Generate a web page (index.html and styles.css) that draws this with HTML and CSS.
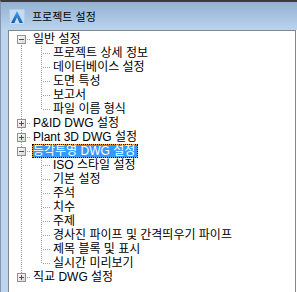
FILE: index.html
```html
<html>
<head>
  <link rel="stylesheet" href="styles.css">
</head>
<body>
  <div class="frame">
    <div class="header">
      <svg class="app-icon" width="16" height="16" viewBox="0 0 16 16">
        <defs>
          <linearGradient id="ag" x1="0" y1="0" x2="0" y2="1">
            <stop offset="0" stop-color="#4aa3ee"/>
            <stop offset="1" stop-color="#0a5fb4"/>
          </linearGradient>
        </defs>
        <rect x="0.5" y="0.5" width="15" height="15" rx="1" fill="#c7dbf0" stroke="#b3cbe6"/>
        <polygon points="8,2 14,14 10.6,14 8,8.2 5.4,14 2,14" fill="url(#ag)"/>
      </svg>
      <span class="header-title">프로젝트 설정</span>
    </div>
    <div class="content">
      <div class="side-strip"></div>
      <div class="tree">
        <div class="row">
          <div class="cell start"><svg class="expander" width="9" height="9" viewBox="0 0 9 9"><use href="#box"/><path d="M2 4.5H7" stroke="#2b4fa6"/></svg></div>
          <span class="label">일반 설정</span>
        </div>
        <div class="row"><div class="cell pipe"></div><div class="cell tee"></div><span class="label">프로젝트 상세 정보</span></div>
        <div class="row"><div class="cell pipe"></div><div class="cell tee"></div><span class="label">데이터베이스 설정</span></div>
        <div class="row"><div class="cell pipe"></div><div class="cell tee"></div><span class="label">도면 특성</span></div>
        <div class="row"><div class="cell pipe"></div><div class="cell tee"></div><span class="label">보고서</span></div>
        <div class="row"><div class="cell pipe"></div><div class="cell elbow"></div><span class="label">파일 이름 형식</span></div>
        <div class="row">
          <div class="cell tee"><svg class="expander" width="9" height="9" viewBox="0 0 9 9"><use href="#box"/><path d="M2 4.5H7M4.5 2V7" stroke="#2b4fa6"/></svg></div>
          <span class="label">P&amp;ID DWG 설정</span>
        </div>
        <div class="row">
          <div class="cell tee"><svg class="expander" width="9" height="9" viewBox="0 0 9 9"><use href="#box"/><path d="M2 4.5H7M4.5 2V7" stroke="#2b4fa6"/></svg></div>
          <span class="label">Plant 3D DWG 설정</span>
        </div>
        <div class="row">
          <div class="cell tee"><svg class="expander" width="9" height="9" viewBox="0 0 9 9"><use href="#box"/><path d="M2 4.5H7" stroke="#2b4fa6"/></svg></div>
          <span class="label selected">등각투영 DWG 설정</span>
        </div>
        <div class="row"><div class="cell pipe"></div><div class="cell tee"></div><span class="label">ISO 스타일 설정</span></div>
        <div class="row"><div class="cell pipe"></div><div class="cell tee"></div><span class="label">기본 설정</span></div>
        <div class="row"><div class="cell pipe"></div><div class="cell tee"></div><span class="label">주석</span></div>
        <div class="row"><div class="cell pipe"></div><div class="cell tee"></div><span class="label">치수</span></div>
        <div class="row"><div class="cell pipe"></div><div class="cell tee"></div><span class="label">주제</span></div>
        <div class="row"><div class="cell pipe"></div><div class="cell tee"></div><span class="label">경사진 파이프 및 간격띄우기 파이프</span></div>
        <div class="row"><div class="cell pipe"></div><div class="cell tee"></div><span class="label">제목 블록 및 표시</span></div>
        <div class="row"><div class="cell pipe"></div><div class="cell elbow"></div><span class="label">실시간 미리보기</span></div>
        <div class="row">
          <div class="cell elbow"><svg class="expander" width="9" height="9" viewBox="0 0 9 9"><use href="#box"/><path d="M2 4.5H7M4.5 2V7" stroke="#2b4fa6"/></svg></div>
          <span class="label">직교 DWG 설정</span>
        </div>
      </div>
    </div>
  </div>

  <svg width="0" height="0" class="defs">
    <defs>
      <linearGradient id="bg" x1="0" y1="0" x2="1" y2="1">
        <stop offset="0" stop-color="#ffffff"/>
        <stop offset="1" stop-color="#d6d6d6"/>
      </linearGradient>
      <rect id="box" x="0.5" y="0.5" width="8" height="8" fill="url(#bg)" stroke="#919191"/>
    </defs>
  </svg>
</body>
</html>
```

FILE: styles.css
```css
* {
  box-sizing: border-box;
  margin: 0;
  padding: 0;
}

body {
  background-color: #ffffff;
  font-family: "Liberation Sans", "Noto Sans CJK KR", sans-serif;
  color: #000000;
  overflow: hidden;
}

.frame {
  width: 297px;
  height: 292px;
  border-top: 2px solid #3c3c3c;
  border-left: 1px solid #8796ae;
  display: flex;
  flex-direction: column;
}

.header {
  height: 28px;
  display: flex;
  align-items: center;
  gap: 7px;
  padding-left: 8px;
  background: linear-gradient(to bottom, #93b1d3, #bad4ed);
}

.app-icon {
  flex: none;
  margin-top: 2px;
}

.header-title {
  font-size: 11px;
  line-height: 14px;
  margin-top: 2px;
}

.content {
  flex: 1;
  display: flex;
}

.side-strip {
  width: 7px;
  background-color: #bcd4ee;
}

.tree {
  flex: 1;
  margin-right: 1px;
  border: 1px solid #828790;
  border-bottom: none;
  background-color: #ffffff;
  padding: 1px 0 0 2px;
}

.row {
  display: flex;
  height: 14px;
}

.cell {
  flex: none;
  width: 20px;
  height: 14px;
  background-repeat: no-repeat;
}

.pipe {
  background-image: repeating-linear-gradient(to bottom, #a0a0a0 0 1px, transparent 1px 2px);
  background-position: 10px 0;
  background-size: 1px 14px;
}

.tee {
  background-image:
    repeating-linear-gradient(to bottom, #a0a0a0 0 1px, transparent 1px 2px),
    repeating-linear-gradient(to right, #a0a0a0 0 1px, transparent 1px 2px);
  background-position: 10px 0, 12px 7px;
  background-size: 1px 14px, 8px 1px;
}

.elbow {
  background-image:
    repeating-linear-gradient(to bottom, #a0a0a0 0 1px, transparent 1px 2px),
    repeating-linear-gradient(to right, #a0a0a0 0 1px, transparent 1px 2px);
  background-position: 10px 0, 12px 7px;
  background-size: 1px 8px, 8px 1px;
}

.start {
  background-image:
    repeating-linear-gradient(to bottom, #a0a0a0 0 1px, transparent 1px 2px),
    repeating-linear-gradient(to right, #a0a0a0 0 1px, transparent 1px 2px);
  background-position: 10px 7px, 12px 7px;
  background-size: 1px 7px, 8px 1px;
}

.expander {
  display: block;
  margin: 3px 0 0 6px;
}

.label {
  margin-left: 1px;
  height: 14px;
  border: 1px solid transparent;
  padding: 0 2px 0 0;
  font-size: 12px;
  line-height: 12px;
  white-space: nowrap;
}

.selected {
  color: #ffffff;
  border: 1px dotted #000000;
  background: linear-gradient(#3399ff, #3399ff) padding-box, #f39b2b border-box;
}

.defs {
  position: absolute;
}
```
